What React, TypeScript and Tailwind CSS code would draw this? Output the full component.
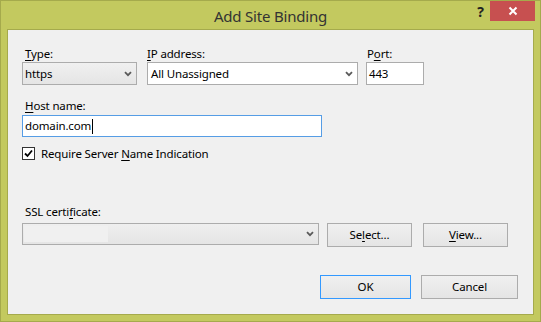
import React from "react";

const Chevron: React.FC = () => (
  <svg width="8" height="6" viewBox="0 0 8 6" className="shrink-0">
    <path d="M1 1.2 L4 4.2 L7 1.2" fill="none" stroke="#5a5a5a" strokeWidth="1.8" />
  </svg>
);

const Btn: React.FC<{ w: string; focus?: boolean; children: React.ReactNode }> = ({ w, focus, children }) => (
  <button
    className={
      "h-[24px] flex items-center justify-center bg-gradient-to-b from-[#f0f0f0] to-[#e5e5e5] text-black border " +
      w +
      (focus ? " border-[#3399ff]" : " border-[#acacac]")
    }
  >
    {children}
  </button>
);

const App: React.FC = () => {
  return (
    <div
      className="w-[541px] h-[322px] bg-[#c3c95f] border border-[#a5aa4c] flex flex-col"
      style={{ fontFamily: '"Segoe UI", "Noto Sans", sans-serif' }}
    >
      {/* title bar */}
      <div className="h-[27px] grid grid-cols-[1fr_auto_1fr]">
        <div />
        <div className="text-[15px] leading-[30px] text-[#333333] tracking-[-0.2px]">Add Site Binding</div>
        <div className="flex justify-end items-start pr-[5px]">
          <div className="mr-[6px] mt-[3px] text-[14px] font-bold text-[#222] leading-[16px]">?</div>
          <div className="w-[45px] h-[20px] bg-[#c75050] flex items-center justify-center">
            <svg width="10" height="10" viewBox="0 0 10 10">
              <path d="M1.5 1.5 L8.5 8.5 M8.5 1.5 L1.5 8.5" stroke="#ffffff" strokeWidth="2" />
            </svg>
          </div>
        </div>
      </div>

      {/* client area */}
      <div className="mx-[6px] mt-[1px] mb-[6px] flex-1 border border-[#a5aa4c] bg-[#f0f0f0] pl-[14px] pt-[15px] text-[11.5px] tracking-[-0.15px] text-black">
        {/* row 1 */}
        <div className="flex">
          <div className="w-[115px]">
            <div className="h-[17px] leading-[17px] pl-[3px]">
              <span className="underline underline-offset-2">T</span>ype:
            </div>
            <div className="h-[23px] border border-[#acacac] bg-gradient-to-b from-[#f0f0f0] to-[#e5e5e5] flex items-center justify-between pl-[2px] pr-[4px]">
              <span>https</span>
              <Chevron />
            </div>
          </div>
          <div className="w-[211px] ml-[10px]">
            <div className="h-[17px] leading-[17px]">
              <span className="underline underline-offset-2">I</span>P address:
            </div>
            <div className="h-[23px] border border-[#acacac] bg-white flex items-center justify-between pl-[3px] pr-[4px]">
              <span>All Unassigned</span>
              <Chevron />
            </div>
          </div>
          <div className="w-[58px] ml-[8px]">
            <div className="h-[17px] leading-[17px] pl-[1px]">
              P<span className="underline underline-offset-2">o</span>rt:
            </div>
            <div className="h-[23px] border border-[#acacac] bg-white flex items-center pl-[2px]">443</div>
          </div>
        </div>

        {/* host name */}
        <div className="mt-[12px] h-[17px] leading-[17px] pl-[3px]">
          <span className="underline underline-offset-2">H</span>ost name:
        </div>
        <div className="mt-[1px] w-[300px] h-[22px] border border-[#569de5] bg-white flex items-center pl-[2px]">
          domain.com<span className="w-[1px] h-[15px] bg-black ml-[1px]" />
        </div>

        {/* checkbox */}
        <div className="mt-[10px] flex items-center h-[13px]">
          <div className="w-[13px] h-[13px] border border-[#333333] bg-white flex items-center justify-center">
            <svg width="9" height="9" viewBox="0 0 9 9">
              <path d="M1 4.5 L3.5 7 L8 1.5" fill="none" stroke="#000" strokeWidth="1.8" />
            </svg>
          </div>
          <span className="ml-[6px]">
            Require Server <span className="underline underline-offset-2">N</span>ame Indication
          </span>
        </div>

        {/* ssl */}
        <div className="mt-[43px] h-[17px] leading-[17px] pl-[3px]">
          SSL certi<span className="underline underline-offset-2">f</span>icate:
        </div>
        <div className="mt-[3px] flex items-start">
          <div className="w-[297px] h-[22px] border border-[#acacac] bg-gradient-to-b from-[#efefef] to-[#e5e5e5] flex items-center justify-between pl-[1px] pr-[4px]">
            <div className="w-[84px] h-[16px] bg-[#f0f0f0]" />
            <Chevron />
          </div>
          <div className="ml-[8px]">
            <Btn w="w-[85px]">
              Se<span className="underline underline-offset-2">l</span>ect...
            </Btn>
          </div>
          <div className="ml-[11px]">
            <Btn w="w-[85px]">
              <span className="underline underline-offset-2">V</span>iew...
            </Btn>
          </div>
        </div>

        {/* ok / cancel */}
        <div className="mt-[28px] flex pl-[298px]">
          <Btn w="w-[91px]" focus>
            OK
          </Btn>
          <div className="ml-[10px]">
            <Btn w="w-[97px]">Cancel</Btn>
          </div>
        </div>
      </div>
    </div>
  );
};

export default App;
